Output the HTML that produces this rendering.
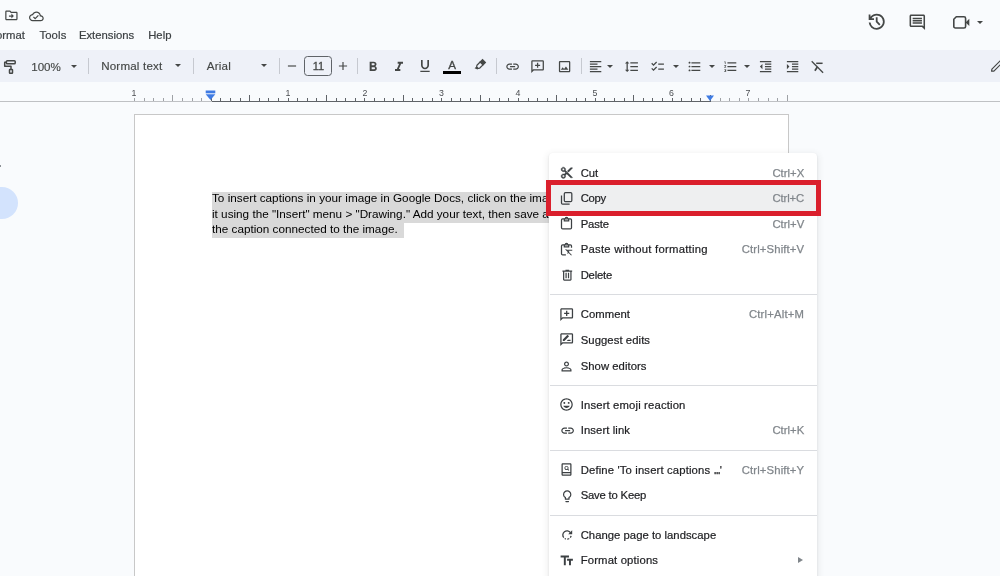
<!DOCTYPE html>
<html><head><meta charset="utf-8"><title>Google Docs</title>
<style>
html,body{margin:0;padding:0}
#root{position:absolute;left:0;top:0;width:1000px;height:576px;will-change:transform;overflow:hidden}
body{width:1000px;height:576px;overflow:hidden;position:relative;background:#f9fbfd;font-family:"Liberation Sans",sans-serif;color:#3c4043}
.abs{position:absolute}
svg{display:block;width:100%;height:100%}
.icon{position:absolute;color:#444746}
.menubar span{position:absolute;top:28px;font-size:11.3px;line-height:14px;color:#3c4043;white-space:nowrap;-webkit-text-stroke:0.2px #3c4043}
.toolbar{position:absolute;left:0;top:50px;width:1000px;height:32px;background:#eef1f8}
.tsep{position:absolute;top:8px;width:1px;height:16px;background:#c6c9d0}
.ttext{position:absolute;top:10px;font-size:11.6px;line-height:14px;color:#444746;white-space:nowrap;-webkit-text-stroke:0.15px #444746}
.arrow{position:absolute;width:0;height:0;border-left:3.1px solid transparent;border-right:3.1px solid transparent;border-top:3.2px solid #444746}
.rulerline{position:absolute;left:0;top:101px;width:1000px;height:1px;background:#bfc1c4}
.tk{position:absolute;width:1px;background:#5f6368}
.tk.lt{background:#9fa2a6}
.rn{position:absolute;top:88px;width:20px;text-align:center;font-size:8.8px;line-height:10px;color:#4a4d51}
.page{position:absolute;left:134px;top:114px;width:653px;height:480px;background:#fff;border:1px solid #c8c8c8}
.doc{position:absolute;left:212px;font-size:11.73px;line-height:16px;height:16px;color:#000;white-space:nowrap}
.sel{position:absolute;background:#d9d9d9}
.menu{position:absolute;left:548.8px;top:152.7px;width:267.8px;height:440px;background:#fff;border-radius:4px;box-shadow:0 1px 2px rgba(60,64,67,.14),0 2px 6px 2px rgba(60,64,67,.08)}
.mic{position:absolute;color:#3c4043}
.lb,.sc{position:absolute;font-size:11.3px;line-height:26px;height:26px;white-space:nowrap}
.lb{left:580.7px;color:#202124;-webkit-text-stroke:0.2px #202124}
.el{display:inline-block;width:6.2px;height:10px;letter-spacing:0}
.el span{display:inline-block;transform:scaleX(.56);transform-origin:0 50%;font-weight:bold;-webkit-text-stroke:0.5px #202124}
.sc{color:#80868b;-webkit-text-stroke:0.25px #80868b}
.sep{position:absolute;left:549.5px;width:267px;height:1px;background:#dadce0}
.hl{position:absolute;left:545.5px;top:179.7px;width:265.5px;height:26px;border:5px solid #da1f2c;background:#eeeff0}
.subarr{position:absolute;left:798.3px;top:556.5px;width:0;height:0;border-top:3px solid transparent;border-bottom:3px solid transparent;border-left:5.6px solid #80868b}
</style></head><body><div id="root">

<!-- top icons -->
<div class="icon" style="left:3.85px;top:8.4px;width:14.8px;height:14.8px"><svg viewBox="0 0 24 24"><path fill="currentColor" d="M20 6h-8l-2-2H4c-1.100 0-1.990.9-1.990 2L2 18c0 1.100.9 2 2 2h16c1.100 0 2-.9 2-2V8c0-1.100-.9-2-2-2zm0 12H4V6h5.170l2 2H20v10zm-8-1l4-4-4-4v3H8v2h4v3z"/></svg></div>
<div class="icon" style="left:28.8px;top:8.7px;width:14.75px;height:14.75px"><svg viewBox="0 0 24 24"><path fill="currentColor" d="M19.350 10.040C18.670 6.590 15.640 4 12 4 9.110 4 6.600 5.640 5.350 8.040 2.340 8.360 0 10.910 0 14c0 3.310 2.690 6 6 6h13c2.760 0 5-2.240 5-5 0-2.640-2.050-4.780-4.650-4.960zM19 18H6c-2.210 0-4-1.790-4-4s1.790-4 4-4h.710C7.370 7.690 9.480 6 12 6c3.040 0 5.500 2.460 5.500 5.500v.5H19c1.660 0 3 1.340 3 3s-1.340 3-3 3zm-9-3.820l-2.090-2.090L6.500 13.500 10 17l6.010-6.010-1.410-1.410z"/></svg></div>

<div class="icon" style="left:866.1px;top:11.1px;width:21.4px;height:21.4px"><svg viewBox="0 -960 960 960"><path fill="currentColor" d="M480-120q-138 0-240.500-91.500T122-440h82q14 104 92.500 172T480-200q117 0 198.500-81.500T760-480q0-117-81.500-198.500T480-760q-69 0-129 32t-101 88h110v80H120v-240h80v94q51-64 124.500-99T480-840q75 0 140.500 28.500t114 77q48.500 48.500 77 114T840-480q0 75-28.500 140.500t-77 114q-48.500 48.500-114 77T480-120Zm112-192L440-464v-216h80v184l128 128-56 56Z"/></svg></div>
<div class="icon" style="left:907.7px;top:12.6px;width:18.6px;height:18.6px"><svg viewBox="0 0 24 24"><path fill="currentColor" d="M21.990 4c0-1.100-.89-2-1.990-2H4c-1.100 0-2 .9-2 2v12c0 1.100.9 2 2 2h14l4 4-.01-18zM20 4v13.170L18.830 16H4V4h16zM6 12h12v2H6zm0-3h12v2H6zm0-3h12v2H6z"/></svg></div>
<svg class="abs" style="left:950px;top:12px;width:24px;height:20px;color:#444746" viewBox="0 0 24 20"><path fill="none" stroke="currentColor" stroke-width="1.600" stroke-linejoin="round" d="M6.300 4.800H14a1.600 1.600 0 0 1 1.600 1.600v8.000a1.600 1.600 0 0 1 -1.600 1.600H5.400a1.600 1.600 0 0 1 -1.600 -1.600V7.300z"/><path fill="currentColor" d="M15.600 10.400L19.300 6.700V14.100z"/></svg>
<div class="arrow" style="left:976.9px;top:20.9px"></div>

<!-- menubar -->
<div class="menubar">
<span style="left:-10.9px">Format</span>
<span style="left:39.4px;letter-spacing:0.15px">Tools</span>
<span style="left:78.9px">Extensions</span>
<span style="left:148.2px">Help</span>
</div>

<!-- toolbar -->
<div class="toolbar">
  <svg class="abs" style="left:0;top:0;width:20px;height:32px;color:#444746" viewBox="0 0 20 32" fill="none" stroke="currentColor" stroke-width="1.5" stroke-linejoin="round"><rect x="6.4" y="10.700" width="8.800" height="3.100" rx="0.9"/><path d="M6.400 12.200H4.700V16.200H11V19.500"/><rect x="9.500" y="19.600" width="3" height="3.600" rx="0.500"/></svg>
  <div class="ttext" style="left:31.2px">100%</div>
  <div class="arrow" style="left:71.1px;top:14.8px"></div>
  <div class="tsep" style="left:88.2px"></div>
  <div class="ttext" style="left:101.2px;top:9px;letter-spacing:0.18px">Normal text</div>
  <div class="arrow" style="left:175.1px;top:14.4px"></div>
  <div class="tsep" style="left:193px"></div>
  <div class="ttext" style="left:206.7px;top:9px;letter-spacing:0.24px">Arial</div>
  <div class="arrow" style="left:260.6px;top:14.0px"></div>
  <div class="tsep" style="left:279px"></div>
  <div class="icon" style="left:285px;top:9px;width:14px;height:14px"><svg viewBox="0 0 24 24"><path fill="currentColor" d="M19 13H5v-2h14v2z"/></svg></div>
  <div class="abs" style="left:304px;top:6px;width:26px;height:18px;border:1px solid #5f6368;border-radius:3.5px;font-size:11px;line-height:18px;text-align:center;text-indent:1px;color:#444746;-webkit-text-stroke:0.3px #444746">11</div>
  <div class="icon" style="left:336.2px;top:8.900px;width:14px;height:14px"><svg viewBox="0 0 24 24"><path fill="currentColor" d="M19 13h-6v6h-2v-6H5v-2h6V5h2v6h6v2z"/></svg></div>
  <div class="tsep" style="left:357px"></div>
  <div class="icon" style="left:365px;top:8.5px;width:16px;height:16px"><svg viewBox="0 0 24 24"><path fill="currentColor" d="M15.600 10.790c.97-.67 1.650-1.770 1.650-2.790 0-2.260-1.750-4-4-4H7v14h7.040c2.090 0 3.710-1.700 3.710-3.790 0-1.520-.86-2.820-2.150-3.420zM10 6.500h3c.83 0 1.500.67 1.500 1.500s-.67 1.500-1.500 1.500h-3v-3zm3.500 9H10v-3h3.500c.83 0 1.500.67 1.500 1.500s-.67 1.500-1.500 1.500z"/></svg></div>
  <div class="icon" style="left:391px;top:8.500px;width:16px;height:16px"><svg viewBox="0 0 24 24"><path fill="currentColor" d="M10 4v3h2.210l-3.420 8H6v3h8v-3h-2.210l3.420-8H18V4z"/></svg></div>
  <div class="icon" style="left:417px;top:8px;width:16px;height:16px"><svg viewBox="0 0 24 24"><path fill="currentColor" d="M12 17c3.310 0 6-2.690 6-6V3h-2.500v8c0 1.930-1.570 3.500-3.500 3.500S8.500 12.930 8.500 11V3H6v8c0 3.310 2.690 6 6 6zm-7 2v2h14v-2H5z"/></svg></div>
  <div class="abs" style="left:443px;top:7.5px;width:18px;text-align:center;font-size:11.6px;line-height:14px;color:#444746;-webkit-text-stroke:0.3px #444746">A</div>
  <div class="abs" style="left:443px;top:21px;width:18px;height:3px;background:#000"></div>
  <svg class="abs" style="left:469.5px;top:4.7px;width:20px;height:20px;color:#444746" viewBox="-10 -10 20 20"><g transform="rotate(45)"><path fill="currentColor" d="M-2.600 -6.200h5.200v4.600h-5.200z"/><path fill="none" stroke="currentColor" stroke-width="1.200" stroke-linejoin="round" d="M-2.000 -2.200V2.300L-1.000 3.700H1.000L2.000 2.300V-2.200"/><path fill="currentColor" d="M-1.500 3.500H1.500L1.500 5.000L-1.500 6.200z"/></g></svg>
  <div class="tsep" style="left:496.3px"></div>
  <div class="icon" style="left:504.9px;top:8.9px;width:15.2px;height:15.2px"><svg viewBox="0 0 24 24"><path fill="currentColor" d="M3.900 12c0-1.710 1.390-3.100 3.100-3.100h4V7H7c-2.760 0-5 2.240-5 5s2.240 5 5 5h4v-1.900H7c-1.710 0-3.100-1.390-3.100-3.100zM8 13h8v-2H8v2zm9-6h-4v1.900h4c1.710 0 3.100 1.390 3.100 3.100s-1.390 3.100-3.100 3.100h-4V17h4c2.760 0 5-2.240 5-5s-2.240-5-5-5z"/></svg></div>
  <div class="icon" style="left:530.4px;top:8.9px;width:15.2px;height:15.2px"><svg viewBox="0 0 24 24"><path fill="currentColor" d="M20 2H4c-1.100 0-2 .9-2 2v18l4-4h14c1.100 0 2-.9 2-2V4c0-1.100-.9-2-2-2zm0 14H5.170L4 17.170V4h16v12zM11 14h2v-3h3V9h-3V6h-2v3H8v2h3z"/></svg></div>
  <div class="icon" style="left:556.9px;top:8.9px;width:15.2px;height:15.2px"><svg viewBox="0 0 24 24"><path fill="currentColor" d="M19 5v14H5V5h14m0-2H5c-1.100 0-2 .9-2 2v14c0 1.100.9 2 2 2h14c1.100 0 2-.9 2-2V5c0-1.100-.9-2-2-2zm-4.860 8.860l-3 3.870L9 13.140 6 17h12l-3.860-5.140z"/></svg></div>
  <div class="tsep" style="left:581px"></div>
  <div class="icon" style="left:588.4px;top:8.9px;width:15.2px;height:15.2px"><svg viewBox="0 0 24 24"><path fill="currentColor" d="M15 15H3v2h12v-2zm0-8H3v2h12V7zM3 13h18v-2H3v2zm0 8h18v-2H3v2zM3 3v2h18V3H3z"/></svg></div>
  <div class="arrow" style="left:606.5px;top:14.8px"></div>
  <div class="icon" style="left:623.9px;top:8.9px;width:15.2px;height:15.2px"><svg viewBox="0 0 24 24"><path fill="currentColor" d="M6 7h2.500L5 3.500 1.500 7H4v10H1.500L5 20.500 8.500 17H6V7zm4-2v2h12V5H10zm0 14h12v-2H10v2zm0-6h12v-2H10v2z"/></svg></div>
  <div class="icon" style="left:650.4px;top:8.9px;width:15.2px;height:15.2px"><svg viewBox="0 0 24 24"><path fill="currentColor" d="M22 7h-9v2h9V7zm0 8h-9v2h9v-2zM5.540 11L2 7.460l1.410-1.410 2.120 2.120 4.240-4.240 1.410 1.410L5.540 11zm0 8L2 15.460l1.410-1.410 2.120 2.120 4.240-4.240 1.410 1.410L5.540 19z"/></svg></div>
  <div class="arrow" style="left:672.800px;top:14.8px"></div>
  <div class="icon" style="left:686.9px;top:8.9px;width:15.2px;height:15.2px"><svg viewBox="0 0 24 24"><path fill="currentColor" d="M4 10.500c-.83 0-1.500.67-1.500 1.500s.67 1.500 1.500 1.500 1.500-.67 1.500-1.500-.67-1.500-1.500-1.500zm0-6c-.83 0-1.500.67-1.500 1.500S3.170 7.500 4 7.500 5.500 6.830 5.500 6 4.830 4.500 4 4.500zm0 12c-.83 0-1.500.68-1.500 1.500s.68 1.500 1.500 1.500 1.500-.68 1.500-1.500-.67-1.500-1.500-1.500zM7 19h14v-2H7v2zm0-6h14v-2H7v2zm0-8v2h14V5H7z"/></svg></div>
  <div class="arrow" style="left:708.600px;top:14.8px"></div>
  <div class="icon" style="left:722.9px;top:8.9px;width:15.2px;height:15.2px"><svg viewBox="0 0 24 24"><path fill="currentColor" d="M2 17h2v.5H3v1h1v.5H2v1h3v-4H2v1zm1-9h1V4H2v1h1v3zm-1 3h1.800L2 13.100v.9h3v-1H3.200L5 10.900V10H2v1zm5-6v2h14V5H7zm0 14h14v-2H7v2zm0-6h14v-2H7v2z"/></svg></div>
  <div class="arrow" style="left:744px;top:14.8px"></div>
  <div class="icon" style="left:757.9px;top:8.9px;width:15.2px;height:15.2px"><svg viewBox="0 0 24 24"><path fill="currentColor" d="M11 17h10v-2H11v2zm-8-5l4 4V8l-4 4zm0 9h18v-2H3v2zM3 3v2h18V3H3zm8 6h10V7H11v2zm0 4h10v-2H11v2z"/></svg></div>
  <div class="icon" style="left:784.9px;top:8.9px;width:15.2px;height:15.2px"><svg viewBox="0 0 24 24"><path fill="currentColor" d="M3 21h18v-2H3v2zM3 8v8l4-4-4-4zm8 9h10v-2H11v2zM3 3v2h18V3H3zm8 6h10V7H11v2zm0 4h10v-2H11v2z"/></svg></div>
  <svg class="abs" style="left:808px;top:6px;width:20px;height:20px;color:#444746" viewBox="0 0 20 20" fill="none" stroke="currentColor" stroke-linecap="butt"><path d="M3.700 5.300L15.100 16.700" stroke-width="1.300"/><path d="M8.200 7.300H14.600" stroke-width="1.500"/><path d="M9.300 11.000L6.900 14.800" stroke-width="1.700"/></svg>
  <svg class="abs" style="left:985px;top:6px;width:20px;height:20px;color:#444746" viewBox="0 0 20 20" fill="none" stroke="currentColor" stroke-width="1.200" stroke-linejoin="round"><path d="M6.600 15.200L6.900 13.100L15.500 4.500L17.500 6.500L8.900 15.100z"/></svg>
</div>

<!-- ruler -->
<div class="rulerline"></div>
<div class="abs" style="left:211.5px;top:101px;width:499px;height:1px;background:#5f6368"></div>
<div class="tk lt" style="left:134.0px;top:98px;height:3px"></div>
<div class="tk lt" style="left:143.6px;top:98px;height:3px"></div>
<div class="tk lt" style="left:153.2px;top:98px;height:3px"></div>
<div class="tk lt" style="left:162.8px;top:98px;height:3px"></div>
<div class="tk lt" style="left:172.4px;top:95px;height:6px"></div>
<div class="tk lt" style="left:182.0px;top:98px;height:3px"></div>
<div class="tk lt" style="left:191.6px;top:98px;height:3px"></div>
<div class="tk lt" style="left:201.2px;top:98px;height:3px"></div>
<div class="tk" style="left:210.8px;top:98px;height:3px"></div>
<div class="tk" style="left:220.4px;top:98px;height:3px"></div>
<div class="tk" style="left:230.0px;top:98px;height:3px"></div>
<div class="tk" style="left:239.6px;top:98px;height:3px"></div>
<div class="tk" style="left:249.2px;top:95px;height:6px"></div>
<div class="tk" style="left:258.8px;top:98px;height:3px"></div>
<div class="tk" style="left:268.4px;top:98px;height:3px"></div>
<div class="tk" style="left:278.0px;top:98px;height:3px"></div>
<div class="tk" style="left:287.6px;top:98px;height:3px"></div>
<div class="tk" style="left:297.2px;top:98px;height:3px"></div>
<div class="tk" style="left:306.8px;top:98px;height:3px"></div>
<div class="tk" style="left:316.4px;top:98px;height:3px"></div>
<div class="tk" style="left:326.0px;top:95px;height:6px"></div>
<div class="tk" style="left:335.6px;top:98px;height:3px"></div>
<div class="tk" style="left:345.2px;top:98px;height:3px"></div>
<div class="tk" style="left:354.8px;top:98px;height:3px"></div>
<div class="tk" style="left:364.4px;top:98px;height:3px"></div>
<div class="tk" style="left:374.0px;top:98px;height:3px"></div>
<div class="tk" style="left:383.6px;top:98px;height:3px"></div>
<div class="tk" style="left:393.2px;top:98px;height:3px"></div>
<div class="tk" style="left:402.8px;top:95px;height:6px"></div>
<div class="tk" style="left:412.4px;top:98px;height:3px"></div>
<div class="tk" style="left:422.0px;top:98px;height:3px"></div>
<div class="tk" style="left:431.6px;top:98px;height:3px"></div>
<div class="tk" style="left:441.2px;top:98px;height:3px"></div>
<div class="tk" style="left:450.8px;top:98px;height:3px"></div>
<div class="tk" style="left:460.4px;top:98px;height:3px"></div>
<div class="tk" style="left:470.0px;top:98px;height:3px"></div>
<div class="tk" style="left:479.6px;top:95px;height:6px"></div>
<div class="tk" style="left:489.2px;top:98px;height:3px"></div>
<div class="tk" style="left:498.8px;top:98px;height:3px"></div>
<div class="tk" style="left:508.4px;top:98px;height:3px"></div>
<div class="tk" style="left:518.0px;top:98px;height:3px"></div>
<div class="tk" style="left:527.6px;top:98px;height:3px"></div>
<div class="tk" style="left:537.2px;top:98px;height:3px"></div>
<div class="tk" style="left:546.8px;top:98px;height:3px"></div>
<div class="tk" style="left:556.4px;top:95px;height:6px"></div>
<div class="tk" style="left:566.0px;top:98px;height:3px"></div>
<div class="tk" style="left:575.6px;top:98px;height:3px"></div>
<div class="tk" style="left:585.2px;top:98px;height:3px"></div>
<div class="tk" style="left:594.8px;top:98px;height:3px"></div>
<div class="tk" style="left:604.4px;top:98px;height:3px"></div>
<div class="tk" style="left:614.0px;top:98px;height:3px"></div>
<div class="tk" style="left:623.6px;top:98px;height:3px"></div>
<div class="tk" style="left:633.2px;top:95px;height:6px"></div>
<div class="tk" style="left:642.8px;top:98px;height:3px"></div>
<div class="tk" style="left:652.4px;top:98px;height:3px"></div>
<div class="tk" style="left:662.0px;top:98px;height:3px"></div>
<div class="tk" style="left:671.6px;top:98px;height:3px"></div>
<div class="tk" style="left:681.2px;top:98px;height:3px"></div>
<div class="tk" style="left:690.8px;top:98px;height:3px"></div>
<div class="tk" style="left:700.4px;top:98px;height:3px"></div>
<div class="tk" style="left:710.0px;top:95px;height:6px"></div>
<div class="tk lt" style="left:719.6px;top:98px;height:3px"></div>
<div class="tk lt" style="left:729.2px;top:98px;height:3px"></div>
<div class="tk lt" style="left:738.8px;top:98px;height:3px"></div>
<div class="tk lt" style="left:748.4px;top:98px;height:3px"></div>
<div class="tk lt" style="left:758.0px;top:98px;height:3px"></div>
<div class="tk lt" style="left:767.6px;top:98px;height:3px"></div>
<div class="tk lt" style="left:777.2px;top:98px;height:3px"></div>
<div class="tk lt" style="left:786.8px;top:95px;height:6px"></div>
<div class="rn" style="left:124px">1</div>
<div class="rn" style="left:278px">1</div>
<div class="rn" style="left:355px">2</div>
<div class="rn" style="left:431.5px">3</div>
<div class="rn" style="left:508px">4</div>
<div class="rn" style="left:585px">5</div>
<div class="rn" style="left:661.5px">6</div>
<div class="rn" style="left:738px">7</div>
<svg class="abs" style="left:204.9px;top:90.1px;width:11px;height:11px" viewBox="0 0 11 11"><rect x="0.7" y="0.500" width="9.6" height="2.800" fill="#3f7be3"/><path d="M0.700 4.200h9.600L5.500 10z" fill="#3f7be3"/></svg>
<svg class="abs" style="left:705.3px;top:94.5px;width:10px;height:7px" viewBox="0 0 10 7"><path d="M1 0.500h8L5 6.100z" fill="#3f7be3"/></svg>

<!-- left side -->
<div class="abs" style="left:-30px;top:186.8px;width:47.8px;height:32px;border-radius:16px;background:#d3e3fd"></div>
<div class="abs" style="left:0;top:165.3px;width:1.2px;height:1.5px;background:#8d9196"></div>

<!-- page -->
<div class="page"></div>
<div class="sel" style="left:212px;top:192px;width:400px;height:31px"></div>
<div class="sel" style="left:212px;top:222.500px;width:192.3px;height:15.6px"></div>
<div class="doc" style="top:190px;letter-spacing:0.015px">To insert captions in your image in Google Docs, click on the image,</div>
<div class="doc" style="top:206px">it using the "Insert" menu &gt; "Drawing." Add your text, then save and</div>
<div class="doc" style="top:221px">the caption connected to the image.</div>

<!-- context menu -->
<div class="menu"></div>
<div class="hl"></div>
<span class="mic" style="left:560.15px;top:166.05px;width:13.5px;height:13.5px"><svg viewBox="0 0 24 24"><path fill="currentColor" stroke="currentColor" stroke-width="0.700" d="M9.64 7.64c.23-.5.36-1.050.36-1.640 0-2.210-1.790-4-4-4S2 3.790 2 6s1.790 4 4 4c.59 0 1.140-.13 1.640-.36L10 12l-2.360 2.360C7.140 14.130 6.590 14 6 14c-2.210 0-4 1.790-4 4s1.790 4 4 4 4-1.790 4-4c0-.59-.13-1.140-.36-1.640L12 14l7 7h3v-1L9.640 7.640zM6 8c-1.100 0-2-.89-2-2s.9-2 2-2 2 .89 2 2-.9 2-2 2zm0 12c-1.100 0-2-.89-2-2s.9-2 2-2 2 .89 2 2-.9 2-2 2zm6-7.500c-.28 0-.5-.22-.5-.5s.22-.5.5-.5.5.22.5.5-.22.5-.5.5zM19 3l-6 6 2 2 7-7V3h-3z"/></svg></span>
<span class="lb" style="top:160px;letter-spacing:-0.031px">Cut</span>
<span class="sc" style="top:160px;letter-spacing:0.016px;left:772.4px">Ctrl+X</span>
<span class="mic" style="left:559.40px;top:190.50px;width:15px;height:15px"><svg viewBox="0 0 24 24" fill="none" stroke="currentColor" stroke-width="2"><rect x="8.500" y="2.500" width="12" height="14.500" rx="1.800"/><path d="M4 7v12.200c0 1 .8 1.800 1.800 1.800H17"/></svg></span>
<span class="lb" style="top:185px;letter-spacing:-0.269px">Copy</span>
<span class="sc" style="top:185px;letter-spacing:-0.088px;left:772.4px">Ctrl+C</span>
<span class="mic" style="left:559.40px;top:215.70px;width:15px;height:15px"><svg viewBox="0 0 24 24" fill="none" stroke="currentColor" stroke-width="2"><rect x="4" y="4.500" width="16" height="16" rx="1.800"/><path d="M8.500 4.500v3.300h7V4.500" /><path d="M10 4.300a2 2 0 0 1 4 0" /></svg></span>
<span class="lb" style="top:211px;letter-spacing:-0.118px">Paste</span>
<span class="sc" style="top:211px;letter-spacing:0.016px;left:772.4px">Ctrl+V</span>
<span class="mic" style="left:559.40px;top:241.80px;width:15px;height:15px"><svg viewBox="0 0 24 24" fill="none" stroke="currentColor" stroke-width="2"><path d="M11 20.500H5.800c-1 0-1.800-.8-1.800-1.800V6.300c0-1 .8-1.800 1.800-1.800h12.400c1 0 1.800.8 1.800 1.800V9"/><path d="M8.500 4.500v3.300h7V4.500"/><path d="M10 4.300a2 2 0 0 1 4 0"/><path d="M13 13.100H21.200M15.800 14.200L13.800 18.600M10.600 11.600L20 21.200" stroke-width="1.700"/></svg></span>
<span class="lb" style="top:236px;letter-spacing:0.246px">Paste without formatting</span>
<span class="sc" style="top:236px;letter-spacing:0.124px;left:741.8px">Ctrl+Shift+V</span>
<span class="mic" style="left:559.60px;top:267.70px;width:14.6px;height:14.6px"><svg viewBox="0 0 24 24"><path fill="currentColor" d="M15 4V3H9v1H4v2h1v13c0 1.100.9 2 2 2h10c1.100 0 2-.9 2-2V6h1V4h-5zm2 15H7V6h10v13zM9 8h2v9H9zm4 0h2v9h-2z"/></svg></span>
<span class="lb" style="top:262px;letter-spacing:-0.226px">Delete</span>
<span class="mic" style="left:559.20px;top:306.80px;width:15.4px;height:15.4px"><svg viewBox="0 0 24 24"><path fill="currentColor" d="M20 2H4c-1.100 0-2 .9-2 2v18l4-4h14c1.100 0 2-.9 2-2V4c0-1.100-.9-2-2-2zm0 14H5.170L4 17.170V4h16v12zM11 14h2v-3h3V9h-3V6h-2v3H8v2h3z"/></svg></span>
<span class="lb" style="top:301px;letter-spacing:0.047px">Comment</span>
<span class="sc" style="top:301px;letter-spacing:0.194px;left:748.9px">Ctrl+Alt+M</span>
<span class="mic" style="left:559.20px;top:331.60px;width:15.4px;height:15.4px"><svg viewBox="0 0 24 24"><path fill="currentColor" d="M20 2H4c-1.100 0-2 .9-2 2v18l4-4h14c1.100 0 2-.9 2-2V4c0-1.100-.9-2-2-2zm0 14H5.170L4 17.170V4h16v12z"/><path fill="currentColor" d="M6 14v-2.470l6.880-6.880c.2-.2.510-.2.710 0l1.770 1.770c.2.200.2.510 0 .710L8.470 14H6zm6 0l2-2h4v2h-6z"/></svg></span>
<span class="lb" style="top:327px;letter-spacing:0.072px">Suggest edits</span>
<span class="mic" style="left:559.40px;top:358.50px;width:15px;height:15px"><svg viewBox="0 0 24 24"><path fill="currentColor" d="M12 5.900c1.160 0 2.100.94 2.100 2.100s-.94 2.100-2.100 2.100S9.900 9.160 9.900 8s.94-2.100 2.100-2.100m0 9c2.970 0 6.100 1.460 6.100 2.100v1.100H5.900V17c0-.64 3.130-2.100 6.100-2.100M12 4C9.790 4 8 5.790 8 8s1.790 4 4 4 4-1.790 4-4-1.790-4-4-4zm0 9c-2.670 0-8 1.340-8 4v3h16v-3c0-2.660-5.330-4-8-4z"/></svg></span>
<span class="lb" style="top:353px;letter-spacing:0.041px">Show editors</span>
<span class="mic" style="left:559.40px;top:396.80px;width:15px;height:15px"><svg viewBox="0 0 24 24"><path fill="currentColor" d="M11.990 2C6.470 2 2 6.480 2 12s4.470 10 9.990 10C17.520 22 22 17.520 22 12S17.520 2 11.990 2zM12 20c-4.420 0-8-3.580-8-8s3.580-8 8-8 8 3.580 8 8-3.580 8-8 8zm3.500-9c.83 0 1.500-.67 1.500-1.500S16.330 8 15.500 8 14 8.670 14 9.500s.67 1.500 1.500 1.500zm-7 0c.83 0 1.500-.67 1.500-1.500S9.330 8 8.500 8 7 8.670 7 9.500 7.670 11 8.500 11zm3.500 6.500c2.330 0 4.310-1.460 5.110-3.500H6.890c.8 2.040 2.780 3.500 5.110 3.500z"/></svg></span>
<span class="lb" style="top:392px;letter-spacing:0.147px">Insert emoji reaction</span>
<span class="mic" style="left:559.90px;top:423.00px;width:15.2px;height:15.2px"><svg viewBox="0 0 24 24"><path fill="currentColor" d="M3.900 12c0-1.710 1.390-3.100 3.100-3.100h4V7H7c-2.760 0-5 2.240-5 5s2.240 5 5 5h4v-1.900H7c-1.710 0-3.100-1.390-3.100-3.100zM8 13h8v-2H8v2zm9-6h-4v1.900h4c1.710 0 3.100 1.390 3.100 3.100s-1.390 3.100-3.100 3.100h-4V17h4c2.760 0 5-2.240 5-5s-2.240-5-5-5z"/></svg></span>
<span class="lb" style="top:417px;letter-spacing:0.087px">Insert link</span>
<span class="sc" style="top:417px;letter-spacing:0.016px;left:772.4px">Ctrl+K</span>
<span class="mic" style="left:559.40px;top:462.00px;width:15px;height:15px"><svg viewBox="0 0 24 24"><path fill="currentColor" d="M18 2H6c-1.100 0-2 .9-2 2v16c0 1.100.9 2 2 2h12c1.100 0 2-.9 2-2V4c0-1.100-.9-2-2-2zm0 18H6v-2h12v2zm0-4H6V4h12v12z"/><path fill="currentColor" d="M12 6.200c-1.800 0-3.300 1.500-3.300 3.300s1.500 3.300 3.300 3.300c.6 0 1.200-.2 1.700-.5l1.600 1.600 1-1-1.600-1.600c.4-.5.600-1.100.6-1.800 0-1.800-1.500-3.300-3.300-3.300zm0 5.200c-1 0-1.900-.8-1.900-1.900s.9-1.900 1.900-1.900 1.900.8 1.900 1.900-.9 1.900-1.900 1.900z"/></svg></span>
<span class="lb" style="top:457px;letter-spacing:0.143px">Define 'To insert captions <span class="el"><span>…</span></span>'</span>
<span class="sc" style="top:457px;letter-spacing:0.124px;left:741.8px">Ctrl+Shift+Y</span>
<span class="mic" style="left:559.70px;top:488.50px;width:14.4px;height:14.4px"><svg viewBox="0 0 24 24"><path fill="currentColor" d="M9 21c0 .55.45 1 1 1h4c.55 0 1-.45 1-1v-1H9v1zm3-19C8.140 2 5 5.140 5 9c0 2.380 1.190 4.470 3 5.740V17c0 .55.45 1 1 1h6c.55 0 1-.45 1-1v-2.260c1.810-1.270 3-3.360 3-5.740 0-3.860-3.140-7-7-7zm2.850 11.100l-.85.600V16h-4v-2.300l-.85-.6C7.800 12.160 7 10.630 7 9c0-2.760 2.240-5 5-5s5 2.240 5 5c0 1.630-.8 3.160-2.150 4.100z"/></svg></span>
<span class="lb" style="top:482px;letter-spacing:-0.195px">Save to Keep</span>
<span class="mic" style="left:558.65px;top:526.80px;width:16px;height:16px"><svg viewBox="0 0 16 16" fill="none" stroke="currentColor" stroke-width="1.300"><path d="M4.78 10.70A4.200 4.200 0 1 1 11.44 5.59"/><path d="M12.09 8.94A4.200 4.200 0 0 1 5.71 11.52" stroke-dasharray="1.900 1.320"/><path d="M13.200 3.300V7.300H9.200z" fill="currentColor" stroke="none"/></svg></span>
<span class="lb" style="top:522px;letter-spacing:0.019px">Change page to landscape</span>
<span class="mic" style="left:559.15px;top:552.65px;width:15.5px;height:15.5px"><svg viewBox="0 0 24 24"><path fill="currentColor" d="M2.500 4v3h5v12h3V7h5V4h-13zm19 5h-9v3h3v7h3v-7h3V9z"/></svg></span>
<span class="lb" style="top:547px;letter-spacing:0.153px">Format options</span>
<div class="sep" style="top:294px"></div>
<div class="sep" style="top:385px"></div>
<div class="sep" style="top:450px"></div>
<div class="sep" style="top:515px"></div>
<div class="subarr"></div>
</div></body></html>
